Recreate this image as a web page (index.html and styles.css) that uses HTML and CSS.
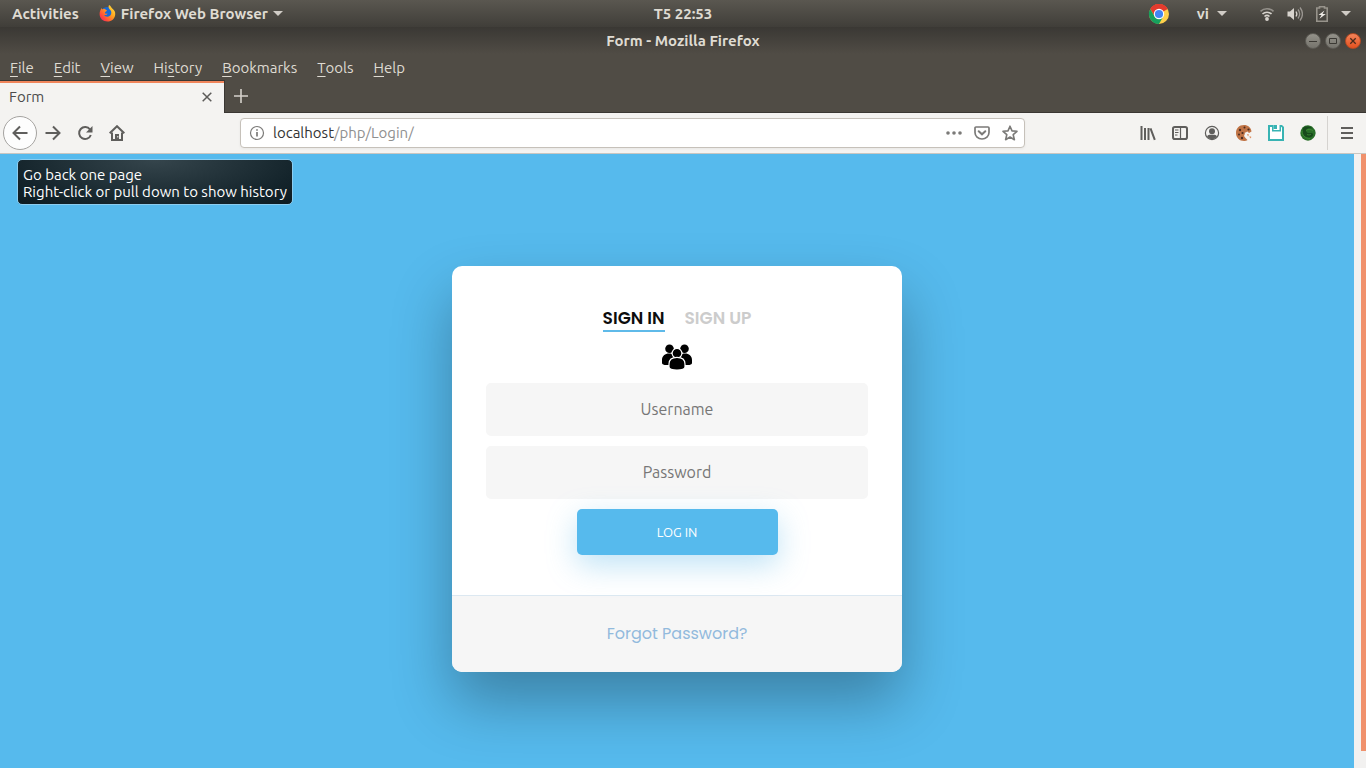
FILE: index.html
```html
<!DOCTYPE html>
<html lang="en">
<head>
<meta charset="utf-8">
<title>Form</title>
<link rel="stylesheet" href="styles.css">
</head>
<body>
<header class="topbar">
  <div class="topbar-left">
    <button class="top-item">Activities</button>
    <button class="top-item app-menu">
      <svg width="17" height="17" viewBox="0 0 17 17" aria-hidden="true">
        <defs><linearGradient id="fox" x1="1" y1="0" x2="0" y2="1"><stop offset="0" stop-color="#fff14a"/><stop offset=".4" stop-color="#ffa51f"/><stop offset=".75" stop-color="#ff4a3c"/><stop offset="1" stop-color="#e4197c"/></linearGradient></defs>
        <circle cx="8" cy="8" r="6" fill="#1769d6"/>
        <path d="M10 0c2 1 2 2.500 3.500 3.800C15.500 5.500 16.500 7 16.200 9.700 15.700 13.900 12.500 16.500 8.500 16.500 4 16.500.6 13.500.6 9c0-2.400.9-4.300 2.200-6l.3 1.500C4.500 3.500 5.500 3.700 6.500 4.500L8 5.500c-.2 1-1.800 1-2 2C5.800 8.600 7 9 8.500 8.600c-.6 1.600-2 1.700-3.300 1.300 1 2.300 5.800 2.600 6.900-.9.600-2-.1-3.400-1.100-4.300C9.800 3.300 9 2.200 10 0z" fill="url(#fox)"/>
      </svg>
      <span>Firefox Web Browser</span>
      <svg width="10" height="6" viewBox="0 0 10 6" aria-hidden="true"><path d="M0 0h10L5 5z" fill="#d0ccc6"/></svg>
    </button>
  </div>
  <time class="clock">T5 22:53</time>
  <div class="tray">
    <button class="tray-item chrome" aria-label="Chrome">
      <svg width="22" height="22" viewBox="0 0 22 22"><circle cx="11" cy="11" r="10" fill="#ffd04b"/><path d="M11 11L2.300 6A10 10 0 0 1 19.700 6z" fill="#e33b2e"/><path d="M11 6h8.700A10 10 0 0 0 2.300 6l4.400 7.500z" fill="#e33b2e"/><path d="M2.300 6a10 10 0 0 0 8.700 15l4.300-7.500L11 16l-4.300-2.500z" fill="#16a05d"/><circle cx="11" cy="11" r="5.200" fill="#fff"/><circle cx="11" cy="11" r="4.100" fill="#4285f4"/></svg>
    </button>
    <button class="tray-item lang"><span>vi</span><svg width="10" height="6" viewBox="0 0 10 6" aria-hidden="true"><path d="M0 0h10L5 5z" fill="#d0ccc6"/></svg></button>
    <button class="tray-item status" aria-label="System menu">
      <svg width="16" height="16" viewBox="0 0 16 16" fill="none" stroke="#d8d4ce" stroke-width="1.600"><path d="M1.500 5.300a9.500 9.500 0 0 1 13 0" opacity=".5"/><path d="M3.500 8a6.500 6.500 0 0 1 9 0"/><path d="M5.500 10.500a3.600 3.600 0 0 1 5 0"/><circle cx="8" cy="13" r="1.100" fill="#d8d4ce"/></svg>
      <svg width="16" height="16" viewBox="0 0 16 16" fill="none" stroke="#d8d4ce" stroke-width="1.300"><path d="M.5 5.500H3L7 2v12l-4-3.500H.5z" fill="#d8d4ce" stroke="none"/><path d="M9 5.500c1 1.500 1 3.500 0 5"/><path d="M11 3.500c2 2.700 2 6.300 0 9M13 1.500c3 4 3 9 0 13" opacity=".55"/></svg>
      <svg width="14" height="16" viewBox="0 0 14 16"><path d="M4.500 2V.8h5V2h2.700v13.200H1.800V2z" fill="none" stroke="#97938b" stroke-width="1.600"/><path d="M9.500 4.500L3.500 9h3l-2 3.800L10.800 8H7.500z" fill="#eeebe6"/></svg>
      <svg width="10" height="6" viewBox="0 0 10 6"><path d="M0 0h10L5 5z" fill="#d0ccc6"/></svg>
    </button>
  </div>
</header>

<div class="titlebar">
  <span></span>
  <span class="window-title">Form - Mozilla Firefox</span>
  <div class="window-controls">
    <button class="win" aria-label="Minimize"><svg width="10" height="10" viewBox="0 0 10 10"><path d="M1 5.500h8" stroke="#3b3934"/></svg></button>
    <button class="win" aria-label="Maximize"><svg width="10" height="10" viewBox="0 0 10 10"><path d="M1.500 2.500h7v5h-7z" fill="none" stroke="#3b3934"/></svg></button>
    <button class="win win-close" aria-label="Close"><svg width="10" height="10" viewBox="0 0 10 10"><path d="M2.300 2.300l5.400 5.400m0-5.400L2.300 7.700" stroke="#4b2a1b" stroke-width="1.300"/></svg></button>
  </div>
</div>

<nav class="menubar">
  <button><u>F</u>ile</button>
  <button><u>E</u>dit</button>
  <button><u>V</u>iew</button>
  <button>Hi<u>s</u>tory</button>
  <button><u>B</u>ookmarks</button>
  <button><u>T</u>ools</button>
  <button><u>H</u>elp</button>
</nav>

<div class="tabstrip">
  <div class="tab">
    <span>Form</span>
    <button aria-label="Close tab"><svg width="10" height="10" viewBox="0 0 10 10"><path d="M.7.700l8.600 8.600m0-8.600L.7 9.300" stroke="#5c5b59" stroke-width="1.500"/></svg></button>
  </div>
  <button class="new-tab" aria-label="New tab"><svg width="14" height="14" viewBox="0 0 14 14"><path d="M7 0v14M0 7h14" stroke="#d5d1cb" stroke-width="1.600"/></svg></button>
</div>

<div class="toolbar">
  <button class="tool back" aria-label="Back" aria-describedby="back-tip"><svg width="16" height="16" viewBox="0 0 16 16"><path d="M15.500 8H1.500M8 1.500L1.500 8 8 14.500" class="line"/></svg></button>
  <button class="tool" aria-label="Forward"><svg width="16" height="16" viewBox="0 0 16 16"><path d="M.5 8h14M8 1.500L14.500 8 8 14.500" class="line"/></svg></button>
  <button class="tool" aria-label="Reload"><svg width="16" height="16" viewBox="0 0 16 16"><path d="M13 4.500A6 6 0 1 0 13.800 10" class="line"/><path d="M15.500 1v6.500H9z" fill="#5f5e5c"/></svg></button>
  <button class="tool" aria-label="Home"><svg width="16" height="16" viewBox="0 0 16 16"><path d="M.7 8.300L8 1.200l7.300 7.100" class="line"/><path d="M3 7.500V15h10V7.500" class="line"/><path d="M6 15V9h4v6z" fill="#5f5e5c"/><path d="M8.300 11h1v1.500h-1z" fill="#f4f3f1"/></svg></button>
  <div class="urlbar">
    <svg width="16" height="16" viewBox="0 0 16 16" aria-hidden="true"><circle cx="8" cy="8" r="6.500" fill="none" stroke="#7b7a78" stroke-width="1.200"/><path d="M8 7v4.500M8 4.200v1.600" stroke="#7b7a78" stroke-width="1.700"/></svg>
    <a class="url" href="#">localhost<span>/php/Login/</span></a>
    <button aria-label="Page actions"><svg width="16" height="16" viewBox="0 0 16 16"><g fill="#7b7a78"><circle cx="2" cy="8" r="1.800"/><circle cx="8" cy="8" r="1.800"/><circle cx="14" cy="8" r="1.800"/></g></svg></button>
    <button aria-label="Save to Pocket"><svg width="16" height="16" viewBox="0 0 16 16" fill="none" stroke="#7b7a78" stroke-width="1.700"><path d="M2 2h12q1 0 1 1v4.500a7 6.500 0 0 1-14 0V3q0-1 1-1z"/><path d="M4.700 6.200L8 9.300l3.300-3.100" stroke-width="2" stroke-linecap="round"/></svg></button>
    <button aria-label="Bookmark this page"><svg width="16" height="16" viewBox="0 0 16 16"><path d="M8 1.200l2 4.700 5 .4-3.800 3.400 1.200 5L8 12l-4.400 2.700 1.200-5L1 6.300l5-.4z" fill="none" stroke="#7b7a78" stroke-width="1.600" stroke-linejoin="round"/></svg></button>
  </div>
  <button class="tool" aria-label="Library"><svg width="16" height="16" viewBox="0 0 16 16"><path d="M1.500 1v14M5 3v12M8.500 3v12M10.500 3.300l4.300 11.500" class="line"/></svg></button>
  <button class="tool" aria-label="Sidebars"><svg width="16" height="16" viewBox="0 0 16 16"><rect x="1" y="2" width="14" height="12" rx="1.800" class="line"/><path d="M8.500 2v12" class="line thin"/><path d="M3 5h3.500M3 7.500h3.500M3 10h2.500" class="line thin"/></svg></button>
  <button class="tool" aria-label="Account"><svg width="16" height="16" viewBox="0 0 16 16"><circle cx="8" cy="8" r="6.600" class="line thin"/><circle cx="8" cy="6.300" r="3" fill="#5f5e5c"/><path d="M3 11.300c1.300-2 3-1.600 5-1.600s3.700-.4 5 1.600a5.800 5.800 0 0 1-10 0z" fill="#5f5e5c"/></svg></button>
  <button class="tool" aria-label="Cookies"><svg width="16" height="16" viewBox="0 0 16 16"><path d="M8 0C3 0 0 3.500 0 8s3.500 8 8 8c1.300 0 2.600-.3 3.500-1l-2-2-1.500-2 1-2.500L8.500 8l3-1.500L13 8l2.500-1.500C15 2.500 12 0 8 0z" fill="#c07446"/><g fill="#4b2c20"><circle cx="4" cy="5" r="1.200"/><circle cx="8.500" cy="2.500" r="1"/><circle cx="12.500" cy="4.500" r="1.100"/><circle cx="3" cy="9.500" r="1"/><circle cx="6.500" cy="8" r="1.100"/><circle cx="6" cy="13" r="1.200"/></g><path d="M11 9l2 .5-1 2zM13.500 11l2 1-1.500 1.500z" fill="#dc8958"/></svg></button>
  <button class="tool" aria-label="Save session"><svg width="16" height="16" viewBox="0 0 16 16"><path d="M0 0h14l2 2v14H0z" fill="#38b3b3"/><path d="M2 2h2v4.500h9V2h.5l.5.800V14H2z" fill="#fff"/><path d="M5.500 0h6v5h-6z" fill="#fff"/><path d="M5.500 0h3.500v4H5.500z" fill="#38b3b3"/></svg></button>
  <button class="tool" aria-label="Extension"><svg width="16" height="16" viewBox="0 0 16 16"><path d="M8 .3l2 .5 2 .6 1.500 1.800L15 5l.7 3-.8 3-1.400 2-2.500 2-3 .7-3-.8-2.500-1.700L.8 10.500.3 8 1 5l1.500-2.500L5 .8z" fill="#286e29"/><path d="M3 3c3-2 7-2 9.500.500-2-.5-5-.5-6 1s0 3.500 2 3.500 4-.5 4.500 1-1 3-3.500 3.500C6 13 3 11 2.500 8z" fill="#174a1c"/><path d="M2 6c0 4 3 7.500 8 7.500M6 5.500c2-1.500 5-1.500 7 .5M7 9.500c1.500.7 3 .4 4-.3" fill="none" stroke="#3f8f35" stroke-width=".8"/></svg></button>
  <span class="divider"></span>
  <button class="tool" aria-label="Open menu"><svg width="16" height="16" viewBox="0 0 16 16"><path d="M2 3h12M2 8h12M2 13h12" class="line"/></svg></button>
  <div class="tooltip" id="back-tip" role="tooltip">Go back one page<br>Right-click or pull down to show history</div>
</div>

<div class="viewport">
  <main class="page">
    <form class="card">
      <div class="card-body">
        <div class="tabs">
          <a class="active" href="#">SIGN IN</a>
          <a href="#">SIGN UP</a>
        </div>
        <svg class="users" width="30" height="26" viewBox="0 0 30 26" aria-hidden="true">
          <circle cx="7.500" cy="4.800" r="4.300"/><circle cx="22.500" cy="4.800" r="4.300"/>
          <path d="M0 19v-3c0-4 3-6.500 7-6.500s7 2.500 7 6.500v5H4c-2 0-4-.6-4-2zM30 19v-3c0-4-3-6.500-7-6.500S16 12 16 16v5h10c2 0 4-.6 4-2z"/>
          <g stroke="#fff" stroke-width="1.200"><circle cx="15" cy="9.300" r="4.900"/><path d="M7 23v-3c0-4.500 3.500-6.700 8-6.700s8 2.200 8 6.700v3c0 2-3 3-8 3s-8-1-8-3z"/></g>
        </svg>
        <input type="text" placeholder="Username" aria-label="Username">
        <input type="password" placeholder="Password" aria-label="Password">
        <button class="login" type="button">LOG IN</button>
      </div>
      <div class="card-footer"><a href="#">Forgot Password?</a></div>
    </form>
  </main>
  <div class="scrollbar"><div class="thumb"></div></div>
</div>
</body>
</html>
```
FILE: styles.css
```css
* { box-sizing: border-box; }

body {
  display: flex;
  flex-direction: column;
  height: 100vh;
  margin: 0;
  overflow: hidden;
  font: 15px/18px Ubuntu, "Noto Sans", sans-serif;
  color: #4c4c4c;
}

button {
  display: flex;
  align-items: center;
  justify-content: center;
  padding: 0;
  border: 0;
  background: none;
  color: inherit;
  font: inherit;
}

a { text-decoration: none; }
svg { display: block; flex: none; }

.line { fill: none; stroke: #5f5e5c; stroke-width: 2; }
.line.thin { stroke-width: 1.2; }

/* Desktop panel */
.topbar, .titlebar {
  display: grid;
  grid-template-columns: 1fr auto 1fr;
  align-items: center;
  flex: none;
  height: 27px;
  color: #dfdbd2;
  font-weight: bold;
}
.topbar { background: linear-gradient(#5a5750, #403e39); }
.titlebar { background: linear-gradient(#3a3834, #504c45); }
.topbar-left { display: flex; gap: 20px; padding-left: 12px; }
.app-menu { gap: 5px; }
.tray { display: flex; justify-content: flex-end; align-items: center; padding-right: 15px; }
.chrome { margin-right: 27px; }
.lang { gap: 8px; margin-right: 32px; }
.status { gap: 12px; }
.window-controls { display: flex; justify-content: flex-end; gap: 4px; padding-right: 5px; }
.win {
  width: 16px;
  height: 16px;
  border: 1px solid #5d5b55;
  border-radius: 50%;
  background: linear-gradient(#94928a, #75736c);
}
.win-close { border-color: #b54a23; background: linear-gradient(#f4845a, #e4511f); }

.menubar {
  display: flex;
  align-items: center;
  flex: none;
  gap: 20px;
  height: 26px;
  padding: 2px 0 0 10px;
  background: #504c45;
  color: #dfdbd2;
}
.menubar u { text-underline-offset: 3px; text-decoration-thickness: 1px; }

/* Tabs */
.tabstrip {
  display: flex;
  align-items: stretch;
  flex: none;
  height: 33px;
  background: #504c45;
  border-bottom: 1px solid #3a3733;
}
.tab {
  display: flex;
  align-items: center;
  justify-content: space-between;
  width: 225px;
  margin-bottom: -1px;
  padding: 0 12px 0 9px;
  border-top: 1px solid #3a3733;
  border-right: 1px solid #3a3733;
  background: #f4f3f1;
  box-shadow: inset 0 2px #f0855b;
}
.new-tab { width: 32px; }

/* Navigation toolbar */
.toolbar {
  position: relative;
  z-index: 1;
  display: flex;
  align-items: center;
  flex: none;
  height: 41px;
  padding: 0 3px;
  background: #f4f3f1;
  border-bottom: 1px solid #c9c6c1;
}
.tool { width: 32px; height: 32px; }
.back {
  width: 34px;
  height: 34px;
  border: 1px solid #a5a3a0;
  border-radius: 50%;
  background: #fdfdfd;
}
.urlbar {
  display: flex;
  align-items: center;
  flex: 1;
  gap: 12px;
  height: 30px;
  margin: 0 107px;
  padding: 0 6px 0 8px;
  border: 1px solid #c6c1ba;
  border-radius: 4px;
  background: #fff;
  box-shadow: 0 1px 3px #0000000d;
}
.url { flex: 1; margin-left: -4px; color: #333; }
.url span { color: #8f8f8f; }
.divider { width: 1px; height: 34px; margin: 0 3px; background: #d5d3d0; }
.tooltip {
  position: absolute;
  top: 46px;
  left: 17px;
  padding: 6px 5px 4px;
  border: 1px solid #8ccdf0;
  border-radius: 5px;
  background: radial-gradient(ellipse at 50% 0, #35454c, #14242b 75%, #0d1c22);
  color: #fff;
  line-height: 17px;
  white-space: nowrap;
}

/* Page */
.viewport { display: flex; flex: 1; min-height: 0; }
.page {
  display: flex;
  align-items: center;
  justify-content: center;
  flex: 1;
  padding-top: 16px;
  overflow: hidden;
  background: #56baed;
}
.scrollbar { width: 12px; padding: 0 0 17px 7px; background: #f2f1f0; }
.thumb { height: 100%; background: #f0916c; }

.card {
  width: 450px;
  border-radius: 10px;
  background: #fff;
  box-shadow: 0 30px 60px 0 rgba(0, 0, 0, .3);
  overflow: hidden;
  font-family: Poppins, Inter, sans-serif;
  font-size: 16px;
  text-align: center;
}
.card-body {
  display: flex;
  flex-direction: column;
  align-items: center;
  gap: 10px;
  padding: 40px 34px;
}
.tabs { display: flex; gap: 20px; font-size: 17px; font-weight: 600; line-height: 24px; }
.tabs a { border-bottom: 2px solid transparent; color: #ccc; }
.tabs .active { border-color: #5fbae9; color: #0d0d0d; }
.users { margin: 2px 0 3px; }
.card input {
  width: 100%;
  height: 53px;
  padding: 0 32px 2px;
  border: 2px solid #f6f6f6;
  border-radius: 5px;
  background: #f6f6f6;
  color: #0d0d0d;
  font: 16px Ubuntu, "Noto Sans", sans-serif;
  text-align: center;
}
.card input::placeholder { color: #777; }
.login {
  width: 201px;
  height: 46px;
  border-radius: 5px;
  background: #56baed;
  box-shadow: 0 10px 30px 0 rgba(95, 186, 233, .4);
  color: #fff;
  font: 13px Ubuntu, "Noto Sans", sans-serif;
}
.card-footer {
  padding: 25px;
  border-top: 1px solid #dce8f1;
  background: #f6f6f6;
  line-height: 26px;
}
.card-footer a { color: #92badd; }
```
